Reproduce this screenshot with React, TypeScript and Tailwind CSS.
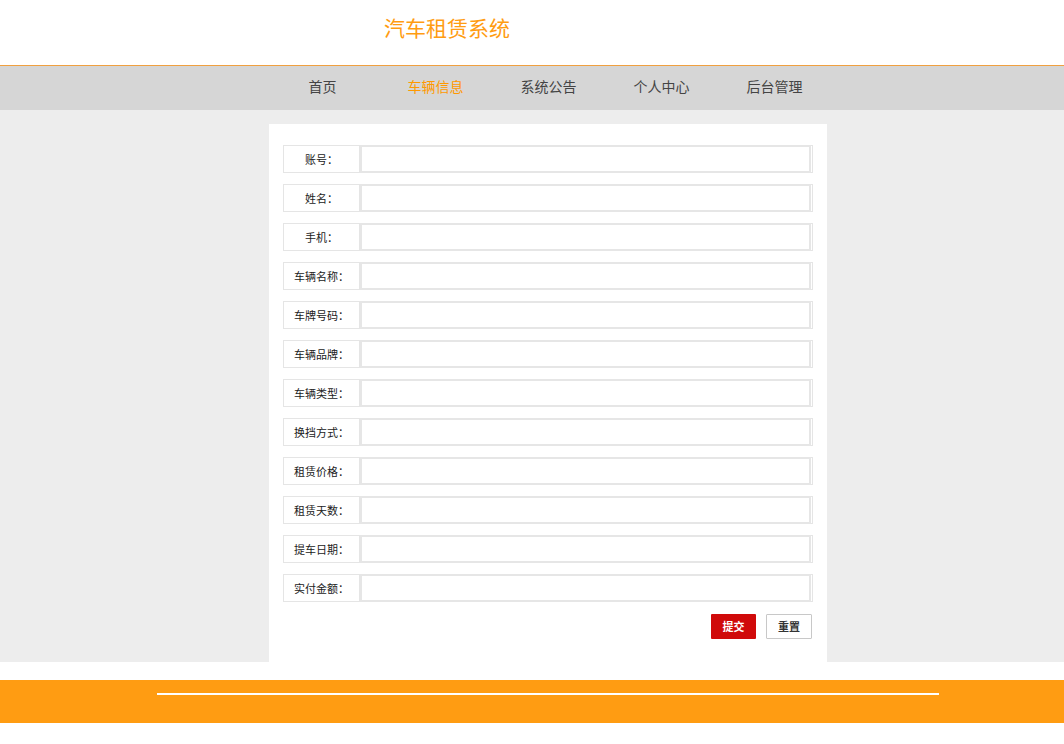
import React from "react";

const fields = [
  "账号",
  "姓名",
  "手机",
  "车辆名称",
  "车牌号码",
  "车辆品牌",
  "车辆类型",
  "换挡方式",
  "租赁价格",
  "租赁天数",
  "提车日期",
  "实付金额",
];

const nav = ["首页", "车辆信息", "系统公告", "个人中心", "后台管理"];

export default function App() {
  return (
    <div
      className="w-[1064px] h-[744px] bg-white overflow-hidden"
      style={{ fontFamily: '"Noto Sans CJK SC", "Noto Sans", sans-serif' }}
    >
      <div className="h-[66px] pl-[384px] pt-[12px] border-b border-[#f0a040]">
        <div className="text-[21px] leading-[30px] text-[#ff9c12]">汽车租赁系统</div>
      </div>
      <div className="h-[44px] bg-[#d6d6d6] flex items-center pl-[266px] pb-[4px]">
        {nav.map((n, i) => (
          <div
            key={n}
            className={`w-[113px] text-center text-[14px] ${i === 1 ? "text-[#ff9900]" : "text-[#444444]"}`}
          >
            {n}
          </div>
        ))}
      </div>
      <div className="bg-[#ededed] pt-[14px] h-[552px]">
        <div className="ml-[269px] w-[558px] h-[538px] bg-white pt-[21px] px-[14px]">
          <div className="flex flex-col gap-[11px]">
            {fields.map((f) => (
              <div key={f} className="flex h-[28px] border border-[#e5e5e5] w-[530px]">
                <div className="w-[76px] border-r border-[#e5e5e5] flex items-center justify-center text-[11px] text-[#222]">
                  {f}：
                </div>
                <div className="flex-1 border-2 border-[#e6e6e6] mr-[1px] -my-[1px]"></div>
              </div>
            ))}
          </div>
          <div className="flex justify-end gap-[10px] mt-[12px] w-[529px]">
            <button className="w-[45px] h-[25px] bg-[#d00a0a] text-white text-[11px] font-bold rounded-[1px]">
              提交
            </button>
            <button className="w-[46px] h-[25px] bg-white border border-[#c8c8c8] text-[#333] text-[11px] font-bold rounded-[1px]">
              重置
            </button>
          </div>
        </div>
      </div>
      <div className="mt-[18px] h-[43px] bg-[#ff9c12] pt-[13px]">
        <div className="ml-[157px] w-[782px] h-[2px] bg-white"></div>
      </div>
    </div>
  );
}
